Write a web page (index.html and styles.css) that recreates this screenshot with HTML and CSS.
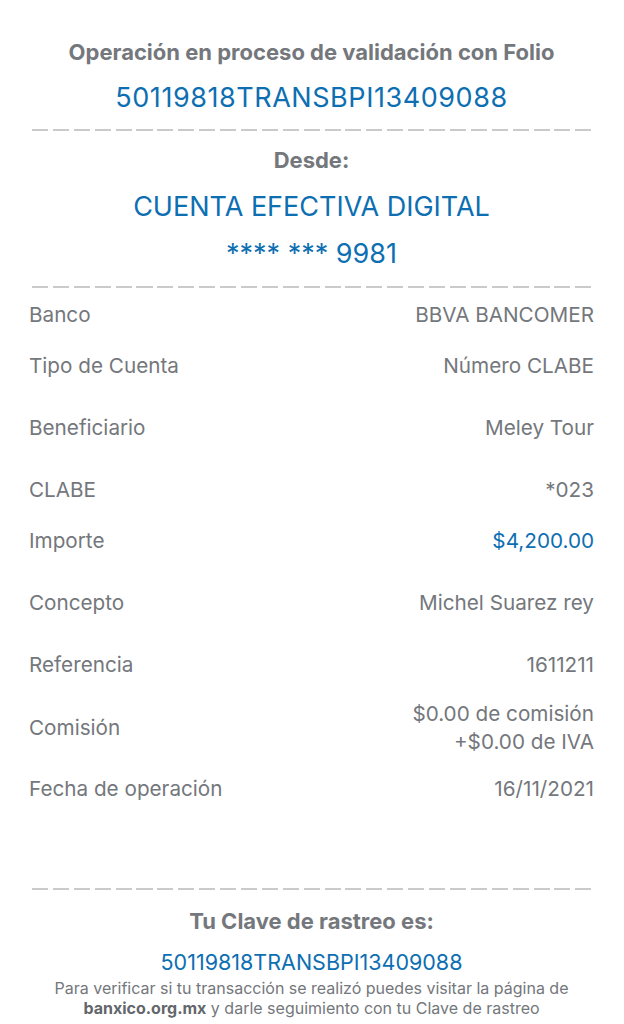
FILE: index.html
```html
<!DOCTYPE html>
<html lang="es">
<head>
<meta charset="utf-8">
<title>Operación en proceso</title>
<link rel="stylesheet" href="styles.css">
</head>
<body>
<main class="receipt">
  <h1 class="title">Operación en proceso de validación con Folio</h1>
  <p class="folio">50119818TRANSBPI13409088</p>
  <div class="dash dash-1"></div>
  <h2 class="subtitle">Desde:</h2>
  <p class="account">CUENTA EFECTIVA DIGITAL</p>
  <p class="account-num">**** *** 9981</p>
  <div class="dash dash-2"></div>

  <dl class="details">
    <div class="row r-banco"><dt>Banco</dt><dd>BBVA BANCOMER</dd></div>
    <div class="row r-short"><dt>Tipo de Cuenta</dt><dd>Número CLABE</dd></div>
    <div class="row"><dt>Beneficiario</dt><dd>Meley Tour</dd></div>
    <div class="row"><dt>CLABE</dt><dd>*023</dd></div>
    <div class="row r-short"><dt>Importe</dt><dd class="amount">$4,200.00</dd></div>
    <div class="row"><dt>Concepto</dt><dd>Michel Suarez rey</dd></div>
    <div class="row"><dt>Referencia</dt><dd>1611211</dd></div>
    <div class="row r-multi"><dt>Comisión</dt><dd class="multi"><span>$0.00 de comisión</span><span>+$0.00 de IVA</span></dd></div>
    <div class="row r-last"><dt>Fecha de operación</dt><dd>16/11/2021</dd></div>
  </dl>

  <div class="dash dash-3"></div>
  <h2 class="subtitle clave">Tu Clave de rastreo es:</h2>
  <p class="tracking">50119818TRANSBPI13409088</p>
  <p class="note">Para verificar si tu transacción se realizó puedes visitar la página de <b>banxico.org.mx</b> y darle seguimiento con tu Clave de rastreo</p>
</main>
</body>
</html>
```

FILE: styles.css
```css
* { box-sizing: border-box; }
html, body { margin: 0; padding: 0; background: #ffffff; }
body {
  font-family: Inter, "Noto Sans", "Liberation Sans", sans-serif;
  color: #74777c;
}
.receipt {
  width: 624px;
  padding: 40px 30px 0 29px;
  display: flex;
  flex-direction: column;
  text-align: center;
}
h1, h2, p, dl, dd, dt { margin: 0; }
.title {
  font-size: 22px;
  font-weight: 700;
  line-height: 24px;
  color: #74777c;
  letter-spacing: 0;
}
.folio {
  margin-top: 18px;
  font-size: 27px;
  line-height: 32px;
  letter-spacing: 0.55px;
  color: #0d6fb2;
  font-weight: 400;
}
.dash {
  height: 2px;
  margin: 0 0 0 3px;
  background: repeating-linear-gradient(to right, #cacaca 0 16px, transparent 16px 20.9px);
}
.dash-1 { margin-top: 15px; }
.subtitle {
  margin-top: 17px;
  font-size: 22px;
  font-weight: 700;
  line-height: 24px;
  color: #74777c;
}
.account {
  margin-top: 19px;
  font-size: 27px;
  line-height: 32px;
  color: #0d6fb2;
}
.account-num {
  margin-top: 15px;
  font-size: 27px;
  line-height: 32px;
  color: #0d6fb2;
}
.dash-2 { margin-top: 16px; }
.details {
  display: flex;
  flex-direction: column;
  text-align: left;
}
.row {
  display: flex;
  justify-content: space-between;
  align-items: center;
  margin-top: 38px;
  font-size: 20.7px;
  line-height: 24px;
}
.row dt { color: #74777c; }
.row dd { color: #74777c; text-align: right; }
.row dd.amount { color: #0d6fb2; }
.r-banco { margin-top: 15px; }
.r-short { margin-top: 27px; }
.r-multi { margin-top: 23px; }
.r-last { margin-top: 21px; }
.multi {
  display: flex;
  flex-direction: column;
  line-height: 28px;
}
.dash-3 { margin-top: 87px; }
.clave { margin-top: 19px; }
.tracking {
  margin-top: 16px;
  font-size: 21.5px;
  line-height: 26px;
  color: #0d6fb2;
}
.note {
  margin-top: 3px;
  font-size: 16px;
  line-height: 20px;
  color: #74777c;
}
.note b { color: #63666b; font-weight: 700; }
```
